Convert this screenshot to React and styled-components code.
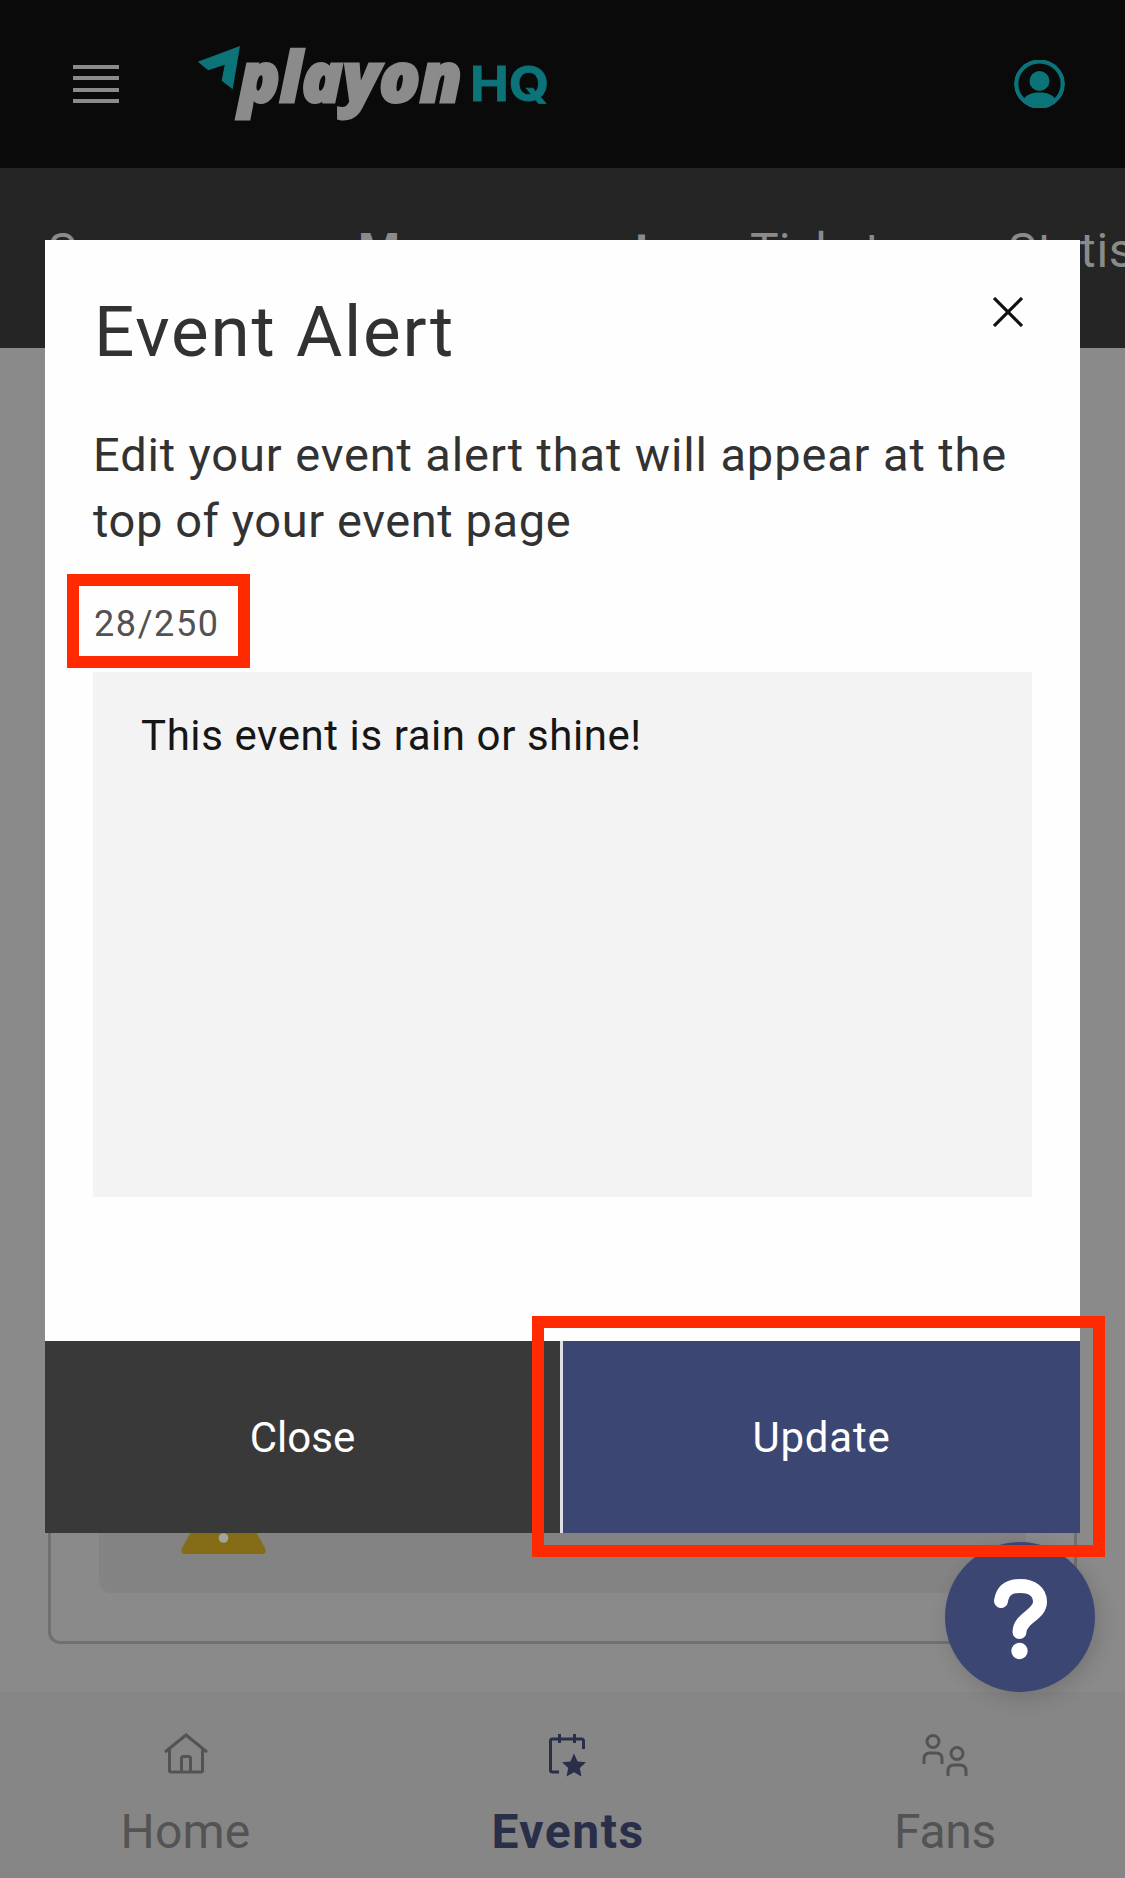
import React from "react";
import styled, { createGlobalStyle } from "styled-components";

const Global = createGlobalStyle`
  *, *::before, *::after { box-sizing: border-box; }
  body { margin: 0; background: #8a8a8a; font-family: Roboto, "Liberation Sans", sans-serif; }
  button, textarea { font: inherit; letter-spacing: inherit; border: 0; border-radius: 0; margin: 0; }
`;

const Screen = styled.div`
  position: relative;
  display: flex;
  flex-direction: column;
  width: 1125px;
  height: 1878px;
  overflow: hidden;
  background: #8a8a8a;
`;

const Header = styled.header`
  flex: none;
  display: flex;
  align-items: center;
  height: 168px;
  padding: 0 60px 0 73px;
  background: #0a0a0a;
`;

const MenuButton = styled.div`
  display: grid;
  gap: 7.33px;
  width: 46px;
  margin-right: 78px;
`;

const Bar = styled.span`
  height: 4px;
  background: #8b8b8b;
`;

const Logo = styled.svg`
  width: 360px;
  height: 110px;
  margin-right: auto;
  overflow: visible;
`;

const Avatar = styled.svg`
  width: 51px;
  height: 48px;
`;

const Tabs = styled.nav`
  flex: none;
  display: flex;
  align-items: center;
  height: 180px;
  padding: 0 0 12px 48px;
  background: #252525;
`;

const Tab = styled.span`
  flex: none;
  width: ${(p) => p.$width}px;
  padding-bottom: 2px;
  font-size: 48px;
  line-height: 64px;
  letter-spacing: ${(p) => p.$track || 0}px;
  font-weight: ${(p) => (p.$active ? 700 : 400)};
  color: #8b8b8b;
  white-space: nowrap;
`;

const Content = styled.main`
  flex: 1;
  display: flex;
  padding: 40px 48px 48px;
`;

const Card = styled.section`
  flex: 1;
  display: flex;
  padding: 48px;
  border: 3px solid #707070;
  border-radius: 12px;
`;

const Notice = styled.div`
  flex: 1;
  display: flex;
  align-items: flex-end;
  padding: 0 82px 39px;
  border-radius: 12px;
  background: #838383;
`;

const BottomNav = styled.nav`
  flex: none;
  display: grid;
  grid-template-columns: 371px 394px 360px;
  height: 186px;
  background: #868686;
`;

const NavItem = styled.div`
  display: flex;
  flex-direction: column;
  align-items: center;
  padding-top: 38px;
  font-size: 48px;
  line-height: 58px;
  letter-spacing: ${(p) => p.$track}px;
  font-weight: ${(p) => (p.$active ? 700 : 400)};
  color: ${(p) => (p.$active ? "#292e49" : "#535353")};

  svg { width: 48px; height: 48px; margin-bottom: 25px; }
`;

const Overlay = styled.div`
  position: absolute;
  inset: 0;
  display: flex;
  align-items: flex-start;
  justify-content: center;
  padding-top: 240px;
`;

const Modal = styled.section`
  display: flex;
  flex-direction: column;
  width: 1035px;
  height: 1293px;
  background: #fefefe;
`;

const ModalHeader = styled.div`
  display: flex;
  justify-content: space-between;
  align-items: flex-start;
  padding: 48px 57px 0 49px;
`;

const Title = styled.h1`
  margin: 0;
  font-size: 71px;
  line-height: 88px;
  font-weight: 400;
  letter-spacing: 1.8px;
  color: #323232;
`;

const CloseIcon = styled.svg`
  width: 30px;
  height: 30px;
  margin-top: 9px;
`;

const ModalBody = styled.div`
  flex: 1;
  display: flex;
  flex-direction: column;
  padding: 46px 48px 0;
`;

const Description = styled.p`
  margin: 0;
  font-size: 47px;
  line-height: 66px;
  color: #323232;
`;

const Line = styled.span`
  display: block;
  letter-spacing: ${(p) => p.$track}px;
`;

const Counter = styled.div`
  margin-top: 46px;
  height: 72px;
  padding-left: 1px;
  font-size: 36px;
  line-height: 48px;
  letter-spacing: 1.6px;
  color: #525252;
`;

const Message = styled.textarea`
  display: block;
  width: 939px;
  height: 525px;
  padding: 36px 48px;
  resize: none;
  outline: 0;
  background: #f3f3f3;
  color: #161616;
  font-size: 42px;
  line-height: 56px;
  letter-spacing: 0.58px;
`;

const Actions = styled.div`
  display: grid;
  grid-template-columns: 515px 517px;
  gap: 3px;
  height: 192px;
  background: #dfe0e6;
`;

const Action = styled.button`
  padding: 1px 0 0;
  background: ${(p) => (p.$primary ? "#3c4672" : "#393939")};
  color: #fff;
  font-size: 42px;
  letter-spacing: ${(p) => p.$track}px;
`;

const HelpButton = styled.div`
  position: absolute;
  left: 945px;
  top: 1542px;
  width: 150px;
  height: 150px;
  border-radius: 50%;
  background: #3c4672;
  box-shadow: 4px 6px 20px rgba(0, 0, 0, 0.15);

  svg { display: block; width: 150px; height: 150px; }
`;

const Highlight = styled.div`
  position: absolute;
  left: ${(p) => p.$x}px;
  top: ${(p) => p.$y}px;
  width: ${(p) => p.$w}px;
  height: ${(p) => p.$h}px;
  border: 12px solid #ff2a00;
`;

export default function App() {
  return (
    <Screen>
      <Global />
      <Header>
        <MenuButton><Bar /><Bar /><Bar /><Bar /></MenuButton>
        <Logo viewBox="197 29 360 110">
          <path fill="#0c7478" d="M197.7 61.7 240 46 232.7 89.3 221.7 80.7 224.7 64.7 208.3 70.3z" />
          <text x="239" y="101.500" fill="#8b8b8b" stroke="#8b8b8b" strokeWidth="3" fontFamily="Open Sans" fontWeight="800" fontStyle="italic" fontSize="69" textLength="223" lengthAdjust="spacingAndGlyphs">playon</text>
          <text x="470" y="101" fill="#0c7478" stroke="#0c7478" strokeWidth="0.8" fontFamily="Inter" fontWeight="700" fontSize="48" textLength="79" lengthAdjust="spacingAndGlyphs">HQ</text>
        </Logo>
        <Avatar viewBox="0 0 51 48">
          <clipPath id="avatar"><ellipse cx="25.5" cy="24" rx="25.5" ry="24.5" /></clipPath>
          <g clipPath="url(#avatar)" fill="#0c7478">
            <ellipse cx="25.5" cy="24" rx="23.3" ry="22.6" fill="none" stroke="#0c7478" strokeWidth="4.4" />
            <circle cx="25.5" cy="21" r="10" />
            <path d="M9 40c3-5 8-7.500 16.500-7.500S39 35 42 40v9H9z" />
          </g>
        </Avatar>
      </Header>
      <Tabs>
        <Tab $width={310}>Summary</Tab>
        <Tab $width={392} $track={0.9} $active>Management</Tab>
        <Tab $width={258}>Tickets</Tab>
        <Tab $width={220} $track={0.6}>Statistics</Tab>
      </Tabs>
      <Content>
        <Card>
          <Notice>
            <svg width="85" height="76" viewBox="0 0 85 76">
              <path fill="#856d18" d="M39 2q3.500-4 7 0L84 70q2 5-2 6H3q-4-1-2-6z" />
              <circle cx="42.500" cy="60" r="4.800" fill="#a3a3a0" />
            </svg>
          </Notice>
        </Card>
      </Content>
      <BottomNav>
        <NavItem $track={0.2}>
          <svg viewBox="0 0 48 48" fill="none" stroke="#535353" strokeWidth="3">
            <path d="M3 22 24 5 45 22M7.500 19V40.500q0 1.500 1.500 1.500H39q1.500 0 1.500-1.500V19M19.500 42V28.500q0-2 2-2h5q2 0 2 2V42" />
          </svg>
          Home
        </NavItem>
        <NavItem $track={1.5} $active>
          <svg viewBox="1 0 48 48" fill="none" stroke="#292e49" strokeWidth="3">
            <path d="M16 42H9.500q-2 0-2-2V11q0-2 2-2h29q2 0 2 2v8M16.500 4v9M31.500 4v9" />
            <path fill="#292e49" stroke="none" d="M31 23.500 34.600 31.400 43 32.300 36.800 38 38.500 46.400 31 42.200 23.500 46.400 25.200 38 19 32.300 27.400 31.400z" />
          </svg>
          Events
        </NavItem>
        <NavItem $track={-0.3}>
          <svg viewBox="0 0 48 48" fill="none" stroke="#535353" strokeWidth="3">
            <circle cx="12" cy="11.500" r="6" /><circle cx="36" cy="23.500" r="6" />
            <path d="M3 34V29q0-6 6-6h6q6 0 6 6v5M27 46V41q0-6 6-6h6q6 0 6 6v5" />
          </svg>
          Fans
        </NavItem>
      </BottomNav>
      <Overlay>
        <Modal>
          <ModalHeader>
            <Title>Event Alert</Title>
            <CloseIcon viewBox="0 0 30 30"><path d="M1 1 29 29M29 1 1 29" stroke="#111" strokeWidth="3.200" /></CloseIcon>
          </ModalHeader>
          <ModalBody>
            <Description>
              <Line $track={0.87}>Edit your event alert that will appear at the</Line>
              <Line $track={0.6}>top of your event page</Line>
            </Description>
            <Counter>28/250</Counter>
            <Message defaultValue="This event is rain or shine!" />
          </ModalBody>
          <Actions>
            <Action $track={0}>Close</Action>
            <Action $track={0.8} $primary>Update</Action>
          </Actions>
        </Modal>
      </Overlay>
      <HelpButton>
        <svg viewBox="0 0 150 150">
          <path d="M56 59C58 47 65 44 75.500 44C87 44 95 50 95 60C95 73 74.500 76 74.500 90" fill="none" stroke="#fff" strokeWidth="14" strokeLinecap="round" />
          <circle cx="74.500" cy="109" r="8.200" fill="#fff" />
        </svg>
      </HelpButton>
      <Highlight $x={67} $y={574} $w={182.500} $h={94} />
      <Highlight $x={532} $y={1316} $w={572.500} $h={241} />
    </Screen>
  );
}
